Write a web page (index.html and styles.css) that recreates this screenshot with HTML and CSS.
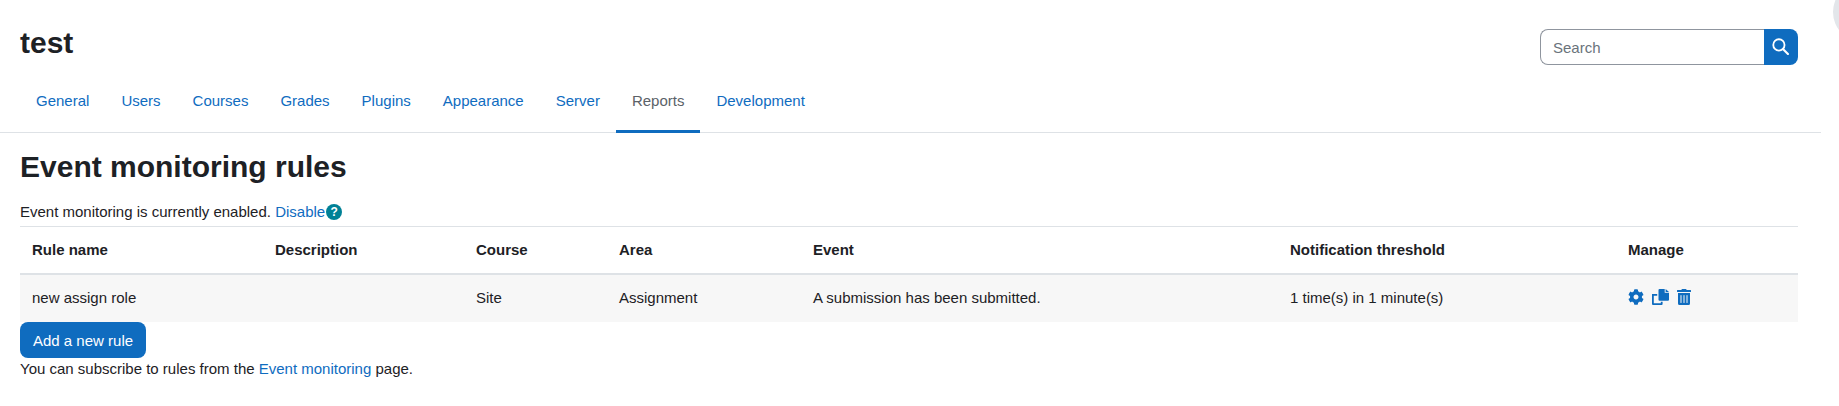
FILE: index.html
```html
<!DOCTYPE html>
<html lang="en">
<head>
<meta charset="utf-8">
<title>Event monitoring rules</title>
<link rel="stylesheet" href="styles.css">
</head>
<body>
<div class="drawer-toggle"></div>
<div class="page">
  <header class="page-header">
    <h1 class="site-title">test</h1>
    <form class="search">
      <input class="search-input" type="text" placeholder="Search">
      <button class="search-btn" type="button" aria-label="Search">
        <svg class="search-icon" viewBox="0 0 16 16" width="17" height="17"><circle cx="6.5" cy="6.500" r="5.300" fill="none" stroke="#fff" stroke-width="1.700"/><path d="M10.500 10.500 15 15" stroke="#fff" stroke-width="2" stroke-linecap="round"/></svg>
      </button>
    </form>
  </header>
  <nav class="tabs">
    <a class="tab" href="#">General</a>
    <a class="tab" href="#">Users</a>
    <a class="tab" href="#">Courses</a>
    <a class="tab" href="#">Grades</a>
    <a class="tab" href="#">Plugins</a>
    <a class="tab" href="#">Appearance</a>
    <a class="tab" href="#">Server</a>
    <a class="tab active" href="#">Reports</a>
    <a class="tab" href="#">Development</a>
  </nav>
  <main class="content">
    <h2 class="page-title">Event monitoring rules</h2>
    <p class="status">Event monitoring is currently enabled. <a href="#">Disable</a><span class="help">?</span></p>
    <table class="rules">
      <thead>
        <tr>
          <th class="c-name">Rule name</th>
          <th class="c-desc">Description</th>
          <th class="c-course">Course</th>
          <th class="c-area">Area</th>
          <th class="c-event">Event</th>
          <th class="c-threshold">Notification threshold</th>
          <th class="c-manage">Manage</th>
        </tr>
      </thead>
      <tbody>
        <tr>
          <td>new assign role</td>
          <td></td>
          <td>Site</td>
          <td>Assignment</td>
          <td>A submission has been submitted.</td>
          <td>1 time(s) in 1 minute(s)</td>
          <td>
            <div class="actions">
              <svg class="icon" viewBox="0 0 512 512" width="16" height="16"><path d="M487.4 315.7l-42.6-24.6c4.3-23.2 4.3-47 0-70.2l42.6-24.6c4.9-2.8 7.1-8.6 5.5-14-11.1-35.6-30-67.8-54.7-94.6-3.8-4.1-10-5.1-14.8-2.3L380.8 110c-17.9-15.4-38.5-27.3-60.8-35.1V25.8c0-5.6-3.9-10.5-9.4-11.7-36.7-8.2-74.3-7.8-109.2 0-5.5 1.2-9.4 6.1-9.4 11.7V75c-22.2 7.9-42.8 19.8-60.8 35.1L88.7 85.5c-4.9-2.8-11-1.9-14.8 2.3-24.7 26.7-43.6 58.9-54.7 94.6-1.7 5.4.6 11.2 5.5 14L67.3 221c-4.3 23.2-4.3 47 0 70.2l-42.6 24.6c-4.9 2.8-7.1 8.6-5.5 14 11.1 35.6 30 67.8 54.7 94.6 3.8 4.1 10 5.1 14.8 2.3l42.6-24.6c17.9 15.4 38.5 27.3 60.8 35.1v49.2c0 5.6 3.9 10.5 9.4 11.7 36.7 8.2 74.3 7.8 109.2 0 5.5-1.2 9.4-6.1 9.4-11.7v-49.2c22.2-7.9 42.8-19.8 60.8-35.1l42.6 24.6c4.9 2.8 11 1.9 14.8-2.3 24.7-26.7 43.6-58.9 54.7-94.6 1.5-5.5-.7-11.3-5.6-14.1zM256 336c-44.1 0-80-35.9-80-80s35.9-80 80-80 80 35.9 80 80-35.9 80-80 80z"/></svg>
              <svg class="icon" viewBox="0 0 17 16" width="17" height="16"><path d="M7.500 0h5.200v3.800H17v7a1 1 0 0 1-1 1H7.500a1 1 0 0 1-1-1V1a1 1 0 0 1 1-1z"/><path d="M13.600 0 17 2.900h-3.400z"/><path d="M0 5h5.200v1.700H1.800v7.600h7v-1.600h1.800v2.300a1 1 0 0 1-1 1H1a1 1 0 0 1-1-1z"/></svg>
              <svg class="icon" viewBox="0 0 448 512" width="14" height="16"><path d="M32 464a48 48 0 0 0 48 48h288a48 48 0 0 0 48-48V128H32zm272-256a16 16 0 0 1 32 0v224a16 16 0 0 1-32 0zm-96 0a16 16 0 0 1 32 0v224a16 16 0 0 1-32 0zm-96 0a16 16 0 0 1 32 0v224a16 16 0 0 1-32 0zM432 32H312l-9.400-18.700A24 24 0 0 0 281.100 0H166.800a23.700 23.700 0 0 0-21.400 13.300L136 32H16A16 16 0 0 0 0 48v32a16 16 0 0 0 16 16h416a16 16 0 0 0 16-16V48a16 16 0 0 0-16-16z"/></svg>
            </div>
          </td>
        </tr>
      </tbody>
    </table>
    <button class="btn-add" type="button">Add a new rule</button>
    <p class="note">You can subscribe to rules from the <a href="#">Event monitoring</a> page.</p>
  </main>
</div>
</body>
</html>
```
FILE: styles.css
```css
* { box-sizing: border-box; }
html, body { margin: 0; padding: 0; }
body {
  font-family: "Liberation Sans", Arial, sans-serif;
  font-size: 15px;
  line-height: 22.5px;
  color: #1d2125;
  background: #fff;
  height: 406px;
  overflow: hidden;
  position: relative;
}
a { color: #0f6cbf; text-decoration: none; }
.drawer-toggle {
  position: absolute;
  top: -18px;
  left: 1833px;
  width: 60px;
  height: 60px;
  border-radius: 50%;
  background: #e3e6ea;
}
.page { width: 1821px; }
.page-header {
  display: flex;
  justify-content: space-between;
  align-items: flex-start;
  padding: 0 23px 0 20px;
  height: 72px;
}
.site-title {
  margin: 25px 0 0;
  font-size: 30px;
  line-height: 36px;
  font-weight: 700;
}
.search { display: flex; margin-top: 29px; width: 258px; height: 36px; }
.search-input {
  flex: 1;
  min-width: 0;
  height: 36px;
  padding: 0 12px;
  border: 1px solid #8f959e;
  border-right: 0;
  border-radius: 8px 0 0 8px;
  font: 15px "Liberation Sans", Arial, sans-serif;
  color: #495057;
  background: #fff;
  outline: none;
}
.search-input::placeholder { color: #6a737b; opacity: 1; }
.search-btn {
  width: 34px;
  height: 36px;
  padding: 0;
  border: 0;
  border-radius: 0 8px 8px 0;
  background: #0f6cbf;
  display: flex;
  align-items: center;
  justify-content: center;
}
.search-icon { margin: -2px 0 0 -1px; }
.tabs {
  display: flex;
  padding-left: 20px;
  height: 61px;
  border-bottom: 1px solid #dee2e6;
}
.tab {
  padding: 0 16px;
  height: 61px;
  line-height: 58px;
  border-bottom: 3px solid transparent;
}
.tab.active { color: #5b6268; border-bottom-color: #0f6cbf; }
.content { padding: 0 23px 0 20px; }
.page-title {
  margin: 16px 0 0;
  font-size: 30px;
  line-height: 36px;
  font-weight: 700;
}
.status { margin: 16px 0 2.5px; height: 22.5px; display: flex; align-items: center; white-space: pre; }
.help {
  display: inline-block;
  width: 16px;
  height: 16px;
  margin-left: 1px;
  border-radius: 50%;
  background: #008196;
  color: #fff;
  font-size: 12px;
  font-weight: 700;
  line-height: 16px;
  text-align: center;
}
.rules {
  width: 1778px;
  table-layout: fixed;
  border-collapse: separate;
  border-spacing: 0;
  line-height: 22px;
}
.rules th, .rules td { padding: 12px; text-align: left; vertical-align: top; }
.rules th {
  font-weight: 700;
  height: 49px;
  border-top: 1px solid #dee2e6;
  border-bottom: 2px solid #dee2e6;
}
.rules td { background: #f7f7f7; height: 47px; }
.c-name { width: 243px; }
.c-desc { width: 201px; }
.c-course { width: 143px; }
.c-area { width: 194px; }
.c-event { width: 477px; }
.c-threshold { width: 338px; }
.c-manage { width: 182px; }
.actions { display: flex; align-items: center; gap: 8px; height: 22px; margin-top: -1px; }
.icon { fill: #0f6cbf; display: block; }
.btn-add {
  display: block;
  height: 36px;
  padding: 0 13px;
  border: 0;
  border-radius: 8px;
  background: #0f6cbf;
  color: #fff;
  font: 15px "Liberation Sans", Arial, sans-serif;
}
.note { margin: 0; }
```
